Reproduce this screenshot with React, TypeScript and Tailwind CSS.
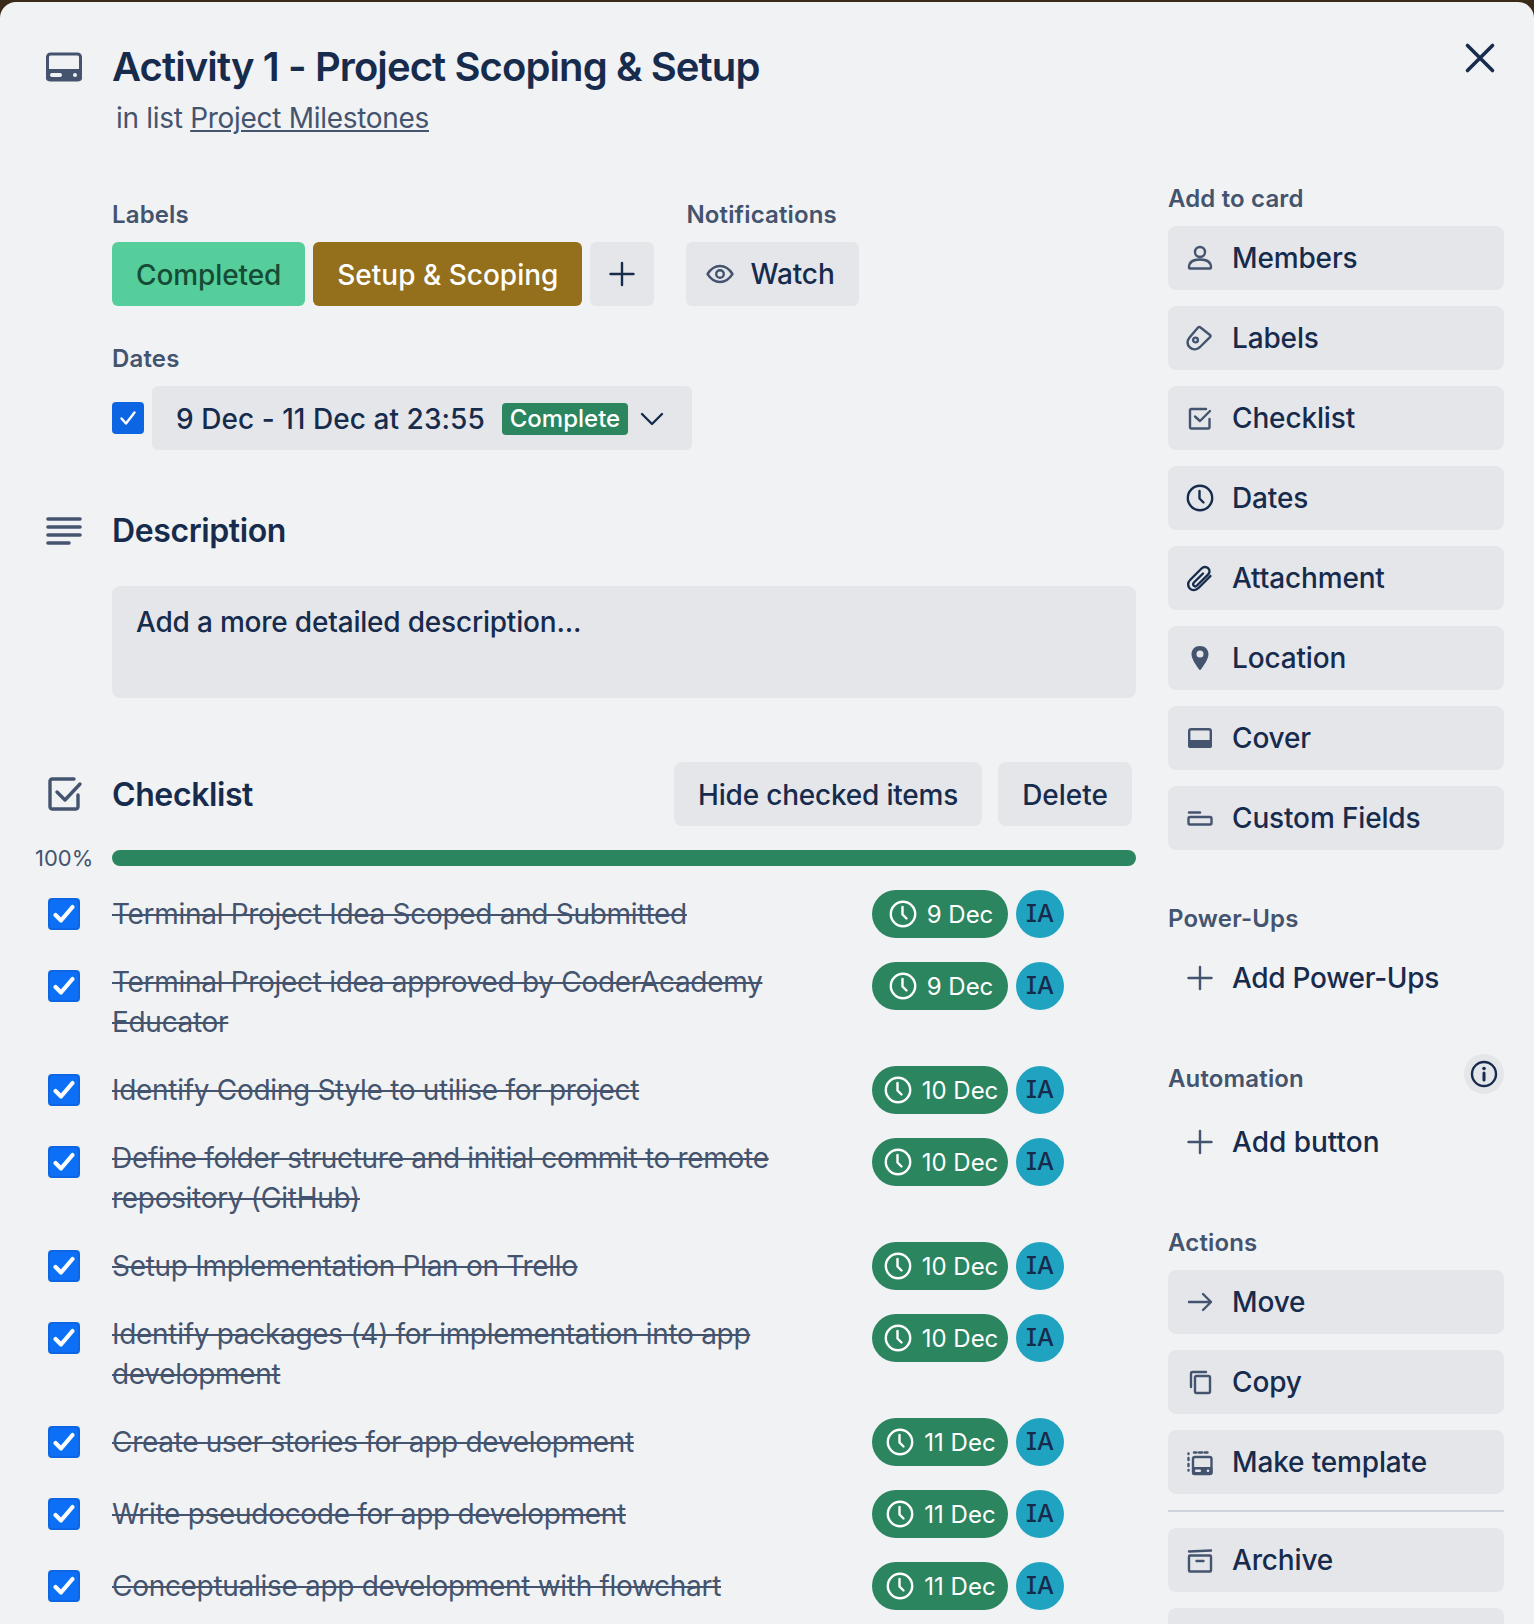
import type { ReactNode } from 'react'

const items = [
  { text: 'Terminal Project Idea Scoped and Submitted', date: '9 Dec' },
  { text: 'Terminal Project idea approved by CoderAcademy Educator', date: '9 Dec' },
  { text: 'Identify Coding Style to utilise for project', date: '10 Dec' },
  { text: 'Define folder structure and initial commit to remote repository (GitHub)', date: '10 Dec' },
  { text: 'Setup Implementation Plan on Trello', date: '10 Dec' },
  { text: 'Identify packages (4) for implementation into app development', date: '10 Dec' },
  { text: 'Create user stories for app development', date: '11 Dec' },
  { text: 'Write pseudocode for app development', date: '11 Dec' },
  { text: 'Conceptualise app development with flowchart', date: '11 Dec' },
]

const Glyph = ({ children, className = 'w-8 h-8' }: { children: ReactNode; className?: string }) => (
  <svg viewBox="0 0 32 32" fill="none" className={`${className} shrink-0`}>
    {children}
  </svg>
)

const stroke = { stroke: '#44546f', strokeWidth: 2.4, strokeLinecap: 'round' as const, strokeLinejoin: 'round' as const }

const ClockIcon = ({ color = '#172b4d', className = 'w-8 h-8' }: { color?: string; className?: string }) => (
  <Glyph className={className}>
    <circle cx="16" cy="16" r="12.2" stroke={color} strokeWidth="2.4" />
    <path d="M15.5 9v7.5l4 4" stroke={color} strokeWidth="2.4" strokeLinecap="round" strokeLinejoin="round" />
  </Glyph>
)

const PlusIcon = ({ color = '#44546f' }: { color?: string }) => (
  <Glyph>
    <path d="M16 5v22M4.5 16h23" stroke={color} strokeWidth="2.4" strokeLinecap="round" />
  </Glyph>
)

const icons: Record<string, ReactNode> = {
  Members: (
    <Glyph>
      <circle cx="16" cy="10" r="5" {...stroke} />
      <path d="M5 25.5c0-5 4-8 11-8s11 3 11 8c0 .6-.4 1-1 1H6c-.6 0-1-.4-1-1z" {...stroke} />
    </Glyph>
  ),
  Labels: (
    <Glyph>
      <path d="M14 5.500c.7-.7 1.700-.7 2.500 0l9.500 7.500c.8.7.8 1.500 0 2.200L16 25c-3 2.800-7 3.200-10 .5S3 19 5.500 15.500z" {...stroke} />
      <circle cx="11.500" cy="18" r="2.400" {...stroke} />
    </Glyph>
  ),
  Checklist: (
    <Glyph>
      <path d="M25.5 17v8c0 .8-.7 1.500-1.500 1.500H7.500C6.700 26.500 6 25.800 6 25V8.500C6 7.700 6.700 7 7.500 7H22" {...stroke} />
      <path d="M11 14.500l5 4.500 10-10" {...stroke} />
    </Glyph>
  ),
  Dates: <ClockIcon />,
  Attachment: (
    <Glyph>
      <path
        d="M26.500 14 14.500 26c-2.800 2.800-6.500 2.800-8.700.5s-2.300-6 .3-8.500L17.500 6.500c2-2 5-2 6.700-.2s1.700 4.500-.2 6.400L13 23.500c-1 1-2.500 1-3.300.2s-.8-2.200.2-3.200L19 11.500"
        stroke="#172b4d"
        strokeWidth="2.400"
        strokeLinecap="round"
        strokeLinejoin="round"
      />
    </Glyph>
  ),
  Location: (
    <Glyph>
      <path fillRule="evenodd" clipRule="evenodd" d="M16 4c-5 0-8.500 3.500-8.500 8.300 0 5.500 6 12.500 7.300 15 .5 1 1.900 1 2.400 0 1.300-2.500 7.300-9.500 7.300-15C24.500 7.500 21 4 16 4zm0 11.500a3.500 3.500 0 1 1 0-7 3.500 3.500 0 0 1 0 7z" fill="#44546f" />
    </Glyph>
  ),
  Cover: (
    <Glyph>
      <rect x="5.200" y="7.200" width="21.600" height="17.600" rx="2" {...stroke} />
      <rect x="4" y="18" width="24" height="8" rx="2" fill="#44546f" />
    </Glyph>
  ),
  'Custom Fields': (
    <Glyph>
      <path d="M5 10.500h11" {...stroke} />
      <rect x="4.500" y="15" width="23" height="7.500" rx="1.500" {...stroke} />
    </Glyph>
  ),
  Move: (
    <Glyph>
      <path d="M5 16h22M19 8l8 8-8 8" {...stroke} />
    </Glyph>
  ),
  Copy: (
    <Glyph>
      <path d="M7 21V7.500C7 6.700 7.700 6 8.500 6H22" {...stroke} />
      <rect x="11" y="10" width="15" height="17" rx="1.500" {...stroke} />
    </Glyph>
  ),
  'Make template': (
    <Glyph>
      <rect x="9" y="11" width="18.500" height="17" rx="2" {...stroke} />
      <rect x="8" y="21" width="20.500" height="8" rx="2" fill="#44546f" />
      <rect x="11" y="23.500" width="6" height="2.400" rx="1" fill="#e4e6ea" />
      <circle cx="24" cy="24.700" r="1.300" fill="#e4e6ea" />
      <path d="M10 6.500h2.500M15 6.500h3M20.500 6.500h3M4.500 7.500v.5M4.500 12v2M4.500 18v2M4.500 24v.5" {...stroke} />
    </Glyph>
  ),
  Archive: (
    <Glyph>
      <path d="M5 7.500 27 6.500" {...stroke} />
      <rect x="5" y="11.500" width="22" height="16" rx="1" {...stroke} />
      <path d="M12.500 17h7" {...stroke} />
    </Glyph>
  ),
}

const Heading = ({ children, className = '' }: { children: ReactNode; className?: string }) => (
  <h3 className={`h-8 text-[24px] leading-[34px] font-semibold tracking-[0.15px] text-[#44546f] mb-3 ${className}`}>{children}</h3>
)

const SideButton = ({ label }: { label: string }) => (
  <button className="flex items-center gap-4 h-16 w-full px-4 rounded-lg bg-[#e4e6ea] text-[28px] tracking-[-0.15px] font-medium text-[#172b4d]">
    {icons[label]}
    <span>{label}</span>
  </button>
)

const CheckBox = ({ bold }: { bold?: boolean }) => (
  <span className={`w-8 h-8 rounded-[4px] flex items-center justify-center shrink-0 ${bold ? 'bg-[#0c6ff5] border-2 border-[#0c66e4]' : 'bg-[#0c66e4]'}`}>
    <svg viewBox="0 0 32 32" className="w-8 h-8 shrink-0" fill="none">
      {bold ? (
        <path d="M7.500 17l5.500 5.500 11.500-13.500" stroke="#fff" strokeWidth="4.200" strokeLinecap="round" strokeLinejoin="round" />
      ) : (
        <path d="M9.500 16.500l4.500 5 8.500-11" stroke="#fff" strokeWidth="2.400" strokeLinecap="round" strokeLinejoin="round" />
      )}
    </svg>
  </span>
)

const ChecklistRow = ({ text, date }: { text: string; date: string }) => (
  <div className="flex items-start py-3 pl-12">
    <span className="mt-2 mr-8">
      <CheckBox bold />
    </span>
    <p className="flex-1 self-center mr-4 text-[28px] leading-10 tracking-[-0.3px] text-[#44546f] line-through">{text}</p>
    <span className="flex items-center justify-center gap-2 w-[136px] h-12 rounded-3xl bg-[#2b855f] text-white text-[24px] shrink-0">
      <ClockIcon color="#fff" />
      <span className="pt-[2px]">{date}</span>
    </span>
    <span className="ml-2 mr-[72px] w-12 h-12 rounded-full bg-[#1fa3c0] text-[#172b4d] text-[24px] font-medium [font-feature-settings:'ss02'] flex items-center justify-center shrink-0">
      IA
    </span>
  </div>
)

export default function App() {
  return (
    <div className="h-[1624px] overflow-hidden bg-[#3a2a18] pt-[2px] font-['Inter',sans-serif] text-[#172b4d]">
      <div className="relative h-full bg-[#f1f2f4] rounded-t-2xl flex gap-8 pr-[30px]">
        <button className="absolute top-[40px] right-[38px]" aria-label="Close">
          <svg viewBox="0 0 32 32" className="w-8 h-8" fill="none">
            <path d="M3.500 3.500l25 25M28.500 3.500l-25 25" stroke="#172b4d" strokeWidth="3.600" strokeLinecap="round" />
          </svg>
        </button>

        <main className="flex-1 min-w-0">
          <header className="flex pl-[44px] pt-[41px]">
            <span className="w-10 mr-7 pt-[9px]">
              <svg viewBox="0 0 40 30" className="w-10 h-[30px]" fill="none">
                <rect x="3.500" y="2" width="33" height="26" rx="3" stroke="#44546f" strokeWidth="3" />
                <rect x="2" y="17" width="36" height="12" rx="3" fill="#44546f" />
                <rect x="6" y="21" width="12" height="4" rx="2" fill="#f1f2f4" />
                <circle cx="31" cy="23" r="2" fill="#f1f2f4" />
              </svg>
            </span>
            <div>
              <h1 className="text-[40px] leading-[48px] font-semibold tracking-[-0.9px] text-[#172b4d]">Activity 1 - Project Scoping &amp; Setup</h1>
              <p className="mt-[11px] ml-1 text-[28px] leading-8 tracking-[-0.3px] text-[#44546f]">
                in list <span className="underline">Project Milestones</span>
              </p>
            </div>
          </header>

          <section className="pl-[112px] mt-[64px]">
            <div className="flex gap-8">
              <div>
                <Heading>Labels</Heading>
                <div className="flex gap-2">
                  <span className="h-16 pt-[2px] flex items-center px-6 rounded-[6px] bg-[#55ce9b] text-[#164b35] text-[28px] tracking-[-0.1px] font-medium">Completed</span>
                  <span className="h-16 pt-[2px] flex items-center px-6 rounded-[6px] bg-[#946f1c] text-white text-[28px] font-medium">Setup &amp; Scoping</span>
                  <button className="w-16 h-16 flex items-center justify-center rounded-[6px] bg-[#e4e6ea]">
                    <PlusIcon color="#172b4d" />
                  </button>
                </div>
              </div>
              <div>
                <Heading>Notifications</Heading>
                <button className="h-16 flex items-center gap-[14px] pl-[18px] pr-6 rounded-[6px] bg-[#e4e6ea] text-[28px] tracking-[-0.1px] font-medium">
                  <Glyph>
                    <path d="M3.500 16C7 10.500 11 8 16 8s9 2.500 12.500 8C25 21.500 21 24 16 24S7 21.500 3.500 16z" {...stroke} />
                    <circle cx="16" cy="16" r="3.800" {...stroke} />
                  </Glyph>
                  Watch
                </button>
              </div>
            </div>

            <div className="mt-9">
              <Heading>Dates</Heading>
              <div className="flex items-center gap-2">
                <CheckBox />
                <button className="h-16 pt-[2px] flex items-center pl-6 pr-6 rounded-[6px] bg-[#e4e6ea] text-[28px] tracking-[0.05px] font-medium">
                  9 Dec - 11 Dec at 23:55
                  <span className="ml-[17px] h-8 px-2 rounded-[4px] bg-[#2b855f] text-white text-[24px] leading-8 tracking-normal font-medium">Complete</span>
                  <svg viewBox="0 0 32 32" className="w-8 h-8 ml-2" fill="none">
                    <path d="M6 11l10 10 10-10" stroke="#172b4d" strokeWidth="2.400" strokeLinecap="round" strokeLinejoin="round" />
                  </svg>
                </button>
              </div>
            </div>
          </section>

          <section className="mt-[61px]">
            <div className="flex items-center pl-[44px] h-10">
              <span className="w-10 mr-7 -mt-[3px]">
                <svg viewBox="0 0 40 32" className="w-10 h-8" fill="none">
                  <path d="M4 5h32M4 13h32M4 21h32M4 29h21" stroke="#44546f" strokeWidth="3.600" strokeLinecap="round" />
                </svg>
              </span>
              <h2 className="text-[32px] leading-10 font-semibold tracking-[-0.4px]">Description</h2>
            </div>
            <div className="ml-[112px] mt-[35px] h-[112px] rounded-lg bg-[#e4e6ea] px-6 py-4 text-[28px] leading-10 tracking-[-0.2px] font-medium">
              Add a more detailed description...
            </div>
          </section>

          <section className="mt-16">
            <div className="flex items-center pl-[44px] pr-1 h-16">
              <span className="w-10 mr-7">
                <svg viewBox="0 0 40 40" className="w-10 h-10" fill="none">
                  <path d="M34 21v12c0 1-1 2-2 2H8c-1 0-2-1-2-2V7c0-1 1-2 2-2h22" stroke="#44546f" strokeWidth="3.400" strokeLinecap="round" strokeLinejoin="round" />
                  <path d="M13 18l8 8 15-16" stroke="#44546f" strokeWidth="3.400" strokeLinecap="round" strokeLinejoin="round" />
                </svg>
              </span>
              <h2 className="flex-1 pt-[2px] text-[32px] leading-10 font-semibold tracking-[-0.4px]">Checklist</h2>
              <button className="h-16 pt-[2px] px-6 rounded-lg bg-[#e4e6ea] text-[28px] tracking-[-0.2px] font-medium">Hide checked items</button>
              <button className="h-16 pt-[2px] px-6 ml-4 rounded-lg bg-[#e4e6ea] text-[28px] font-medium">Delete</button>
            </div>
            <div className="flex items-center pl-[35px] mt-6 h-4">
              <span className="w-[77px] text-[22px] leading-4 text-[#44546f]">100%</span>
              <div className="flex-1 h-4 rounded-lg bg-[#2b855f]" />
            </div>
            <div className="mt-3">
              {items.map((item) => (
                <ChecklistRow key={item.text} text={item.text} date={item.date} />
              ))}
            </div>
          </section>
        </main>

        <aside className="w-[336px] shrink-0 pt-[180px]">
          <Heading>Add to card</Heading>
          <div className="flex flex-col gap-4">
            {['Members', 'Labels', 'Checklist', 'Dates', 'Attachment', 'Location', 'Cover', 'Custom Fields'].map((label) => (
              <SideButton key={label} label={label} />
            ))}
          </div>

          <Heading className="mt-[52px]">Power-Ups</Heading>
          <button className="flex items-center gap-4 h-16 w-full px-4 rounded-lg text-[28px] tracking-[-0.3px] font-medium">
            <PlusIcon />
            Add Power-Ups
          </button>

          <div className="flex justify-between h-12 mt-[52px]">
            <Heading>Automation</Heading>
            <span className="w-10 h-10 -mt-2 rounded-full bg-[#e4e6ea] flex items-center justify-center">
              <svg viewBox="0 0 32 32" className="w-8 h-8" fill="none">
                <circle cx="16" cy="16" r="12" stroke="#172b4d" strokeWidth="2.400" />
                <path d="M16 15v7" stroke="#172b4d" strokeWidth="3" strokeLinecap="round" />
                <circle cx="16" cy="10.500" r="1.800" fill="#172b4d" />
              </svg>
            </span>
          </div>
          <button className="flex items-center gap-4 h-16 w-full px-4 rounded-lg text-[28px] font-medium">
            <PlusIcon />
            Add button
          </button>

          <Heading className="mt-[52px]">Actions</Heading>
          <div className="flex flex-col gap-4">
            {['Move', 'Copy', 'Make template'].map((label) => (
              <SideButton key={label} label={label} />
            ))}
            <hr className="border-t-2 border-[#cfd3db]" />
            <SideButton label="Archive" />
            <div className="h-16 shrink-0 rounded-lg bg-[#e4e6ea]" />
          </div>
        </aside>
      </div>
    </div>
  )
}
